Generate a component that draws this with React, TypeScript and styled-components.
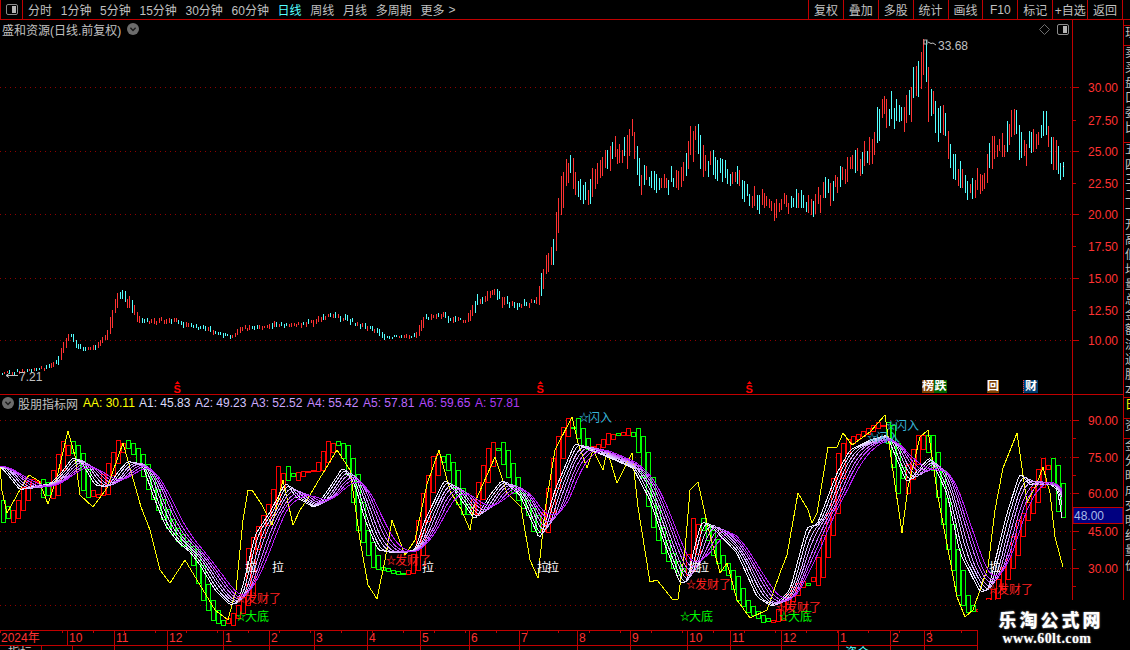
import React from "react";
import styled, { createGlobalStyle } from "styled-components";

type Pt = [number, number];

const RED_LINE = "#c00000";
const RED_TEXT = "#ff3232";
const GRAY_TEXT = "#c0c0c0";

const GlobalStyle = createGlobalStyle`
  html, body {
    margin: 0;
    background: #000;
    overflow: hidden;
  }
  body {
    font-family: "Liberation Sans", "Noto Sans CJK SC", sans-serif;
    font-size: 12px;
  }
`;

const Screen = styled.div`
  position: relative;
  width: 1130px;
  height: 650px;
  background: #000;
  display: flex;
  flex-direction: column;
  overflow: hidden;
  color: ${GRAY_TEXT};
`;

/* top toolbar */
const Toolbar = styled.div`
  height: 19px;
  flex: none;
  display: flex;
  align-items: center;
  justify-content: space-between;
  border-bottom: 1px solid ${RED_LINE};
  padding-right: 7px;
`;

const Nav = styled.div`
  height: 100%;
  display: flex;
  align-items: center;
  gap: 8.7px;
`;

const NavIconCell = styled.div`
  width: 23px;
  height: 100%;
  box-sizing: border-box;
  border-left: 1px solid ${RED_LINE};
  border-right: 1px solid ${RED_LINE};
  display: flex;
  align-items: center;
  justify-content: center;
  margin-right: -3.700px;
`;

const NavItem = styled.span<{ $active?: boolean }>`
  color: ${(p) => (p.$active ? "#54ffff" : GRAY_TEXT)};
  white-space: nowrap;
`;

const NavMore = styled.span`
  margin-left: -4.700px;
  color: ${GRAY_TEXT};
`;

const ToolGroup = styled.div`
  height: 100%;
  display: flex;
  border-right: 1px solid ${RED_LINE};
`;

const ToolButton = styled.div`
  width: 34.9px;
  box-sizing: border-box;
  border-left: 1px solid ${RED_LINE};
  display: flex;
  align-items: center;
  justify-content: center;
  white-space: nowrap;
`;

/* main layout */
const Body = styled.div`
  flex: 1;
  display: flex;
  min-height: 0;
`;

const MainColumn = styled.div`
  width: 1123px;
  flex: none;
  display: flex;
  flex-direction: column;
`;

const ChartRow = styled.div<{ $height: number; $line?: boolean }>`
  height: ${(p) => p.$height}px;
  flex: none;
  box-sizing: border-box;
  display: flex;
  border-bottom: ${(p) => (p.$line ? `1px solid ${RED_LINE}` : "none")};
`;

const ChartPane = styled.div`
  position: relative;
  width: 1072px;
  flex: none;
  display: flex;
  flex-direction: column;
`;

const PaneHead = styled.div<{ $height: number }>`
  height: ${(p) => p.$height}px;
  flex: none;
  display: flex;
  align-items: center;
  padding: 0 3px 0 2px;
`;

const PaneTitle = styled.span<{ $indented?: boolean }>`
  margin: ${(p) => (p.$indented ? "0 5px 0 4px" : "0 6px 0 0")};
  white-space: nowrap;
`;

const HeadIcons = styled.div`
  margin-left: auto;
  display: flex;
  align-items: center;
  gap: 7px;
`;

const Legend = styled.div`
  display: flex;
`;

const LegendItem = styled.span<{ $color: string }>`
  width: 56px;
  color: ${(p) => p.$color};
  white-space: nowrap;
`;

const Plot = styled.svg`
  display: block;
  flex: none;
`;

const AxisColumn = styled.div`
  width: 51px;
  flex: none;
  box-sizing: border-box;
  border-left: 1px solid ${RED_LINE};
`;

const AxisText = styled.text<{ $color?: string }>`
  font: 12px "Liberation Sans", sans-serif;
  fill: ${(p) => p.$color ?? RED_TEXT};
`;

const SignalS = styled.text`
  font: 700 11px "Liberation Sans", sans-serif;
  fill: #ff0000;
`;

const MarkText = styled.text<{ $color: string; $small?: boolean }>`
  font: ${(p) => (p.$small ? "700 10px" : "12px")} "Noto Sans CJK SC", sans-serif;
  fill: ${(p) => p.$color};
`;

const PriceNote = styled.text`
  font: 12px "Liberation Sans", sans-serif;
  fill: ${GRAY_TEXT};
`;

const Badge = styled.span<{ $left: number; $width: number; $bg: string; $edge?: boolean }>`
  position: absolute;
  left: ${(p) => p.$left}px;
  top: 360px;
  width: ${(p) => p.$width}px;
  height: 13px;
  box-sizing: border-box;
  line-height: 13px;
  text-align: center;
  background: ${(p) => p.$bg};
  border-left: ${(p) => (p.$edge ? "1px dotted #ff3232" : "none")};
  color: #fff;
  font-size: 12px;
  font-weight: 700;
  overflow: hidden;
`;

/* month axis */
const TimeAxis = styled.div`
  height: 16px;
  flex: none;
  box-sizing: border-box;
  display: flex;
  border-top: 1px solid ${RED_LINE};
  border-bottom: 1px solid ${RED_LINE};
  background: repeating-linear-gradient(90deg, ${RED_LINE} 0 1px, transparent 1px 31px) 0 0 / 100% 2px no-repeat;
`;

const TimeCell = styled.div<{ $width: number }>`
  width: ${(p) => p.$width}px;
  flex: none;
  box-sizing: border-box;
  padding-left: 1px;
  border-right: 1px solid ${RED_LINE};
  color: ${RED_TEXT};
  line-height: 14px;
  white-space: nowrap;
`;

const BottomRow = styled.div`
  height: 4px;
  flex: none;
  display: flex;
  overflow: hidden;
  line-height: 14px;
`;

const BottomCell = styled.div<{ $width: number; $pad?: number; $color?: string }>`
  width: ${(p) => p.$width}px;
  flex: none;
  box-sizing: border-box;
  padding-left: ${(p) => p.$pad ?? 0}px;
  border-right: 1px solid ${RED_LINE};
  color: ${(p) => p.$color ?? GRAY_TEXT};
  white-space: nowrap;
  overflow: hidden;
`;

/* clipped side panel on the far right */
const SideStrip = styled.div`
  width: 7px;
  flex: none;
  box-sizing: border-box;
  border-left: 1px solid ${RED_LINE};
  display: flex;
  flex-direction: column;
  overflow: hidden;
`;

const StripCell = styled.div<{ $height: number; $color?: string }>`
  height: ${(p) => p.$height}px;
  flex: none;
  box-sizing: border-box;
  border-bottom: 1px solid ${RED_LINE};
  padding-left: 1px;
  width: 40px;
  color: ${(p) => p.$color ?? GRAY_TEXT};
  line-height: 15px;
  overflow: hidden;
`;

/* watermark in the corner */
const Watermark = styled.div`
  position: absolute;
  right: 0;
  bottom: 0;
  width: 152px;
  height: 50px;
  background: #000;
  display: flex;
  flex-direction: column;
  align-items: center;
  padding: 9px 6px 0 0;
  box-sizing: border-box;
`;

const WatermarkTitle = styled.div`
  font: 900 18px/20px "Noto Sans CJK SC", sans-serif;
  letter-spacing: 3px;
  color: #fff;
  text-shadow: 0 0 2px #9a9a9a;
  white-space: nowrap;
`;

const WatermarkUrl = styled.div`
  font: 700 14px/14px "Liberation Serif", serif;
  letter-spacing: 0.4px;
  color: #fff;
  text-shadow: 0 0 2px #8a8a8a;
  margin: 3px 8px 0 0;
  white-space: nowrap;
`;

/* ---- data traced from the chart ---- */

const PRICE: Pt[] = [
  [0, 373], [20, 372], [45, 368], [58, 362], [65, 345], [70, 334], [78, 346], [90, 350], [100, 343], [108, 335],
  [113, 315], [120, 295], [125, 298], [133, 308], [140, 320], [150, 322], [170, 320], [190, 325], [210, 330],
  [230, 337], [245, 328], [260, 327], [275, 325], [290, 326], [310, 323], [330, 316], [345, 318], [360, 325],
  [378, 331], [385, 337], [400, 337], [418, 335], [425, 318], [440, 315], [455, 320], [468, 320], [478, 300],
  [495, 293], [505, 302], [520, 305], [538, 302], [545, 270], [555, 245], [562, 190], [570, 162], [578, 190],
  [590, 195], [600, 165], [612, 150], [622, 160], [632, 132], [640, 178], [660, 184], [680, 178], [690, 145],
  [697, 132], [705, 160], [720, 172], [740, 182], [750, 195], [770, 208], [790, 202], [810, 207], [830, 190],
  [850, 165], [870, 155], [885, 108], [895, 112], [905, 120], [915, 85], [925, 58], [930, 100], [945, 130],
  [955, 165], [968, 195], [985, 178], [995, 145], [1005, 150], [1015, 122], [1025, 150], [1035, 135], [1045, 125],
  [1055, 155], [1062, 172],
];

const YELLOW: Pt[] = [
  [0, 466], [2, 491], [7, 513], [21, 488], [29, 475], [39, 481], [48, 504], [57, 477], [68, 431], [75, 456], [80, 495],
  [93, 507], [107, 488], [123, 443], [141, 507], [150, 530], [160, 570], [170, 583], [185, 560], [200, 585], [215, 610],
  [228, 620], [236, 590], [243, 520], [248, 490], [252, 490], [262, 505], [272, 525], [283, 480], [293, 525], [300, 510],
  [307, 500], [320, 478], [337, 450], [350, 470], [360, 540], [368, 585], [377, 599], [385, 560], [392, 520], [405, 555],
  [415, 540], [427, 484], [439, 450], [450, 491], [461, 509], [470, 530], [475, 502], [495, 457], [507, 493], [521, 507],
  [530, 560], [538, 578], [545, 510], [555, 450], [572, 417], [578, 443], [587, 468], [593, 450], [603, 470], [607, 450],
  [617, 483], [632, 453], [638, 507], [650, 582], [657, 580], [673, 600], [678, 599], [685, 550], [690, 490], [698, 482],
  [707, 523], [720, 573], [727, 563], [737, 600], [750, 618], [767, 610], [780, 573], [787, 555], [798, 493], [808, 510],
  [812, 523], [817, 513], [828, 447], [837, 447], [843, 433], [852, 445], [870, 432], [885, 415], [890, 450], [902, 533],
  [908, 487], [920, 437], [928, 430], [938, 497], [957, 597], [965, 617], [973, 610], [988, 567], [995, 510], [1003, 468],
  [1017, 433], [1027, 503], [1037, 483], [1043, 467], [1050, 493], [1055, 537], [1063, 567],
];

const BAND: Pt[] = [
  [0, 466], [8, 475], [20, 490], [35, 486], [50, 484], [62, 472], [73, 457], [82, 463], [95, 485], [108, 487], [118, 472],
  [128, 461], [143, 466], [153, 495], [165, 525], [178, 542], [190, 552], [200, 565], [215, 590], [230, 605], [238, 602],
  [245, 578], [255, 535], [270, 512], [286, 482], [296, 497], [315, 508], [328, 490], [343, 467], [355, 485], [365, 520],
  [378, 550], [395, 553], [415, 550], [425, 520], [445, 479], [458, 495], [475, 520], [490, 495], [502, 480], [520, 495],
  [540, 540], [555, 490], [575, 443], [583, 447], [610, 458], [633, 468], [650, 500], [665, 545], [680, 583], [687, 582],
  [695, 545], [702, 521], [713, 528], [737, 553], [757, 597], [773, 607], [790, 590], [807, 527], [817, 525], [837, 473],
  [850, 450], [870, 440], [887, 435], [895, 455], [907, 483], [918, 470], [930, 457], [947, 493], [960, 553], [980, 592],
  [988, 590], [1007, 513], [1020, 473], [1030, 485], [1050, 484], [1058, 490], [1063, 527],
];

const STICK: Pt[] = [
  [0, 500], [8, 525], [14, 515], [20, 505], [29, 482], [41, 478], [46, 498], [52, 495], [58, 465], [68, 438], [79, 456],
  [89, 498], [104, 493], [107, 474], [123, 438], [139, 456], [153, 491], [170, 525], [185, 545], [193, 550], [200, 577],
  [207, 600], [217, 620], [227, 625], [230, 620], [237, 613], [247, 597], [250, 553], [260, 530], [275, 498], [282, 466],
  [293, 481], [300, 472], [318, 470], [332, 441], [343, 445], [352, 474], [362, 530], [377, 567], [405, 575], [415, 568],
  [425, 500], [439, 449], [452, 470], [461, 502], [470, 520], [475, 506], [495, 438], [503, 452], [511, 474], [516, 491],
  [523, 502], [532, 515], [540, 540], [550, 500], [560, 440], [572, 418], [577, 428], [583, 440], [590, 450], [603, 443],
  [612, 433], [622, 435], [632, 428], [638, 437], [645, 463], [650, 497], [657, 527], [667, 553], [678, 570], [685, 578],
  [693, 550], [698, 510], [703, 527], [710, 533], [717, 555], [723, 565], [733, 577], [740, 597], [750, 610], [767, 622],
  [777, 620], [783, 607], [797, 587], [805, 580], [812, 585], [817, 577], [823, 553], [832, 513], [840, 457], [847, 443],
  [853, 438], [865, 432], [885, 420], [890, 433], [895, 457], [902, 493], [910, 470], [920, 440], [925, 428], [930, 445],
  [937, 470], [943, 503], [950, 540], [957, 570], [963, 600], [973, 613], [985, 608], [993, 597], [1003, 577], [1013, 553],
  [1020, 523], [1027, 513], [1033, 500], [1040, 477], [1045, 457], [1050, 460], [1053, 467], [1058, 487], [1063, 517],
];

const interp = (pts: Pt[], x: number) => {
  if (x <= pts[0][0]) return pts[0][1];
  for (let i = 1; i < pts.length; i++) {
    if (x <= pts[i][0]) {
      const [x0, y0] = pts[i - 1];
      const [x1, y1] = pts[i];
      return y0 + ((y1 - y0) * (x - x0)) / (x1 - x0);
    }
  }
  return pts[pts.length - 1][1];
};

let seed = 41;
const rnd = () => {
  seed = (seed * 1664525 + 1013904223) % 4294967296;
  return seed / 4294967296;
};

const buildCandles = () => {
  let up = "";
  let down = "";
  for (let i = 0; i * 2.45 + 2 < 1063; i++) {
    const x = Math.round(i * 2.45 + 2) + 0.5;
    const y = interp(PRICE, x);
    const slope = interp(PRICE, x + 3) - interp(PRICE, x - 3);
    const vol = Math.max(3, 3 + (340 - y) * 0.09);
    const h = vol * (0.4 + 0.8 * rnd()) + Math.abs(slope) * 0.6;
    const mid = y + (rnd() - 0.5) * vol * 0.8;
    const isUp = rnd() < (slope < 0 ? 0.78 : 0.3);
    const seg = `M${x} ${Math.round(mid - h / 2)}V${Math.round(mid + h / 2)}`;
    if (isUp) up += seg;
    else down += seg;
  }
  return { up, down };
};

const buildBoxes = () => {
  const boxes: { x: number; y: number; h: number; up: boolean }[] = [];
  for (let x = 1; x < 1063; x += 5) {
    const a = interp(STICK, x - 4);
    const b = interp(STICK, x + 6);
    boxes.push({
      x,
      y: Math.round(Math.min(a, b)),
      h: Math.round(Math.abs(a - b)),
      up: interp(STICK, x + 4) < interp(STICK, x - 2),
    });
  }
  return boxes;
};

const smoothBand = () => {
  const raw: number[] = [];
  for (let x = -60; x <= 1075; x++) raw.push(interp(BAND, x));
  return (x: number, back: number) => {
    const end = Math.round(x) + 60;
    const start = Math.max(0, Math.round(end - back));
    let sum = 0;
    for (let i = start; i <= end; i++) sum += raw[i];
    return sum / (end - start + 1);
  };
};

const BAND_COLORS = ["#f0ecff", "#e0d4ff", "#d8b8ff", "#d094ff", "#ca6cff", "#c244ff", "#b81cf8"];

const buildBandLines = () => {
  const avg = smoothBand();
  return BAND_COLORS.map((_, n) => {
    const parts: string[] = [];
    for (let x = 0; x <= 1063; x += 2) {
      parts.push(`${x},${avg(x + 2, 4 + n * 5.5).toFixed(1)}`);
    }
    return parts.join(" ");
  });
};

const candles = buildCandles();
const boxes = buildBoxes();
const bandLines = buildBandLines();
const yellowPoints = YELLOW.map((p) => p.join(",")).join(" ");

const PRICE_LABELS: [string, number, boolean][] = [
  ["30.00", 87, true], ["27.50", 120, false], ["25.00", 151, true], ["22.50", 183, false], ["20.00", 214, true],
  ["17.50", 246, false], ["15.00", 278, true], ["12.50", 310, false], ["10.00", 340, true],
];
const IND_LABELS: [string, number][] = [["90.00", 420], ["75.00", 457], ["60.00", 493], ["45.00", 531], ["30.00", 568]];
const IND_GRID = [420, 457, 493, 531, 568, 605];
const S_MARKS = [177, 540, 749];

const LEGEND: [string, string][] = [
  ["AA: 30.11", "#ffff00"], ["A1: 45.83", "#dcdcfc"], ["A2: 49.23", "#d4c4fc"], ["A3: 52.52", "#cca8fc"],
  ["A4: 55.42", "#c488fc"], ["A5: 57.81", "#bc68fc"], ["A6: 59.65", "#b448fc"], ["A: 57.81", "#ac38f0"],
];

const NAV_ITEMS = ["分时", "1分钟", "5分钟", "15分钟", "30分钟", "60分钟", "日线", "周线", "月线", "多周期", "更多"];
const TOOLS = ["复权", "叠加", "多股", "统计", "画线", "F10", "标记", "+自选", "返回"];
const MONTHS: [string, number][] = [
  ["2024年", 68], ["10", 47], ["11", 53], ["12", 56], ["1", 46], ["2", 45], ["3", 53], ["4", 53], ["5", 49], ["6", 50],
  ["7", 58], ["8", 53], ["9", 57], ["10", 43], ["11", 51], ["12", 57], ["1", 52], ["2", 34], ["3", 53],
];
const BOTTOM_CELLS: [number, string, number, string?][] = [
  [42, "指标", 8], [31, "", 0], [42, "", 0], [53, "", 0], [56, "", 0], [46, "", 0], [45, "", 0], [53, "", 0], [53, "", 0],
  [49, "", 0], [50, "", 0], [58, "", 0], [53, "", 0], [57, "", 0], [43, "", 0], [51, "", 0], [57, "", 0],
  [52, "资金", 6, "#54ffff"], [34, "", 0], [53, "", 0],
];
const STRIP: [number, string | undefined, string][] = [
  [6, undefined, ""],
  [20, undefined, "现"],
  [97, undefined, "卖买盘口委比"],
  [255, undefined, "五四三二一开高低均量总金额流通股本市"],
  [21, "#ffff00", "日"],
  [20, undefined, "资"],
  [211, undefined, "金分时成交明细量价"],
];

const PanelIcon = () => (
  <svg width="12" height="11" viewBox="0 0 12 11">
    <rect x="0.5" y="0.5" width="11" height="10" rx="1.5" fill="none" stroke="#8c8c8c" />
    <rect x="6" y="2" width="4" height="7" fill="#b4b4b4" />
  </svg>
);

const DropIcon = () => (
  <svg width="12" height="12" viewBox="0 0 12 12" style={{ flex: "none" }}>
    <circle cx="6" cy="6" r="6" fill="#6c6c6c" />
    <path d="M3.4 4.8 6 7.4l2.6-2.6" fill="none" stroke="#1a1a1a" strokeWidth="1.4" />
  </svg>
);

const DiamondIcon = () => (
  <svg width="11" height="11" viewBox="0 0 11 11">
    <path d="M5.5.5 10.5 5.5 5.5 10.5.5 5.5Z" fill="none" stroke="#6e6e6e" />
  </svg>
);

const GridLines = ({ ys }: { ys: number[] }) => (
  <>
    {ys.map((y) => (
      <line
        key={y}
        x1="0"
        x2="1072"
        y1={y + 0.5}
        y2={y + 0.5}
        stroke="#900000"
        strokeDasharray="1 4"
        shapeRendering="crispEdges"
      />
    ))}
  </>
);

const StarLabel = ({ x, y, color, text }: { x: number; y: number; color: string; text: string }) => (
  <>
    <MarkText x={x - 1} y={y + 3} $color={color} $small>☆</MarkText>
    <MarkText x={x + 8} y={y + 4} $color={color}>{text}</MarkText>
  </>
);

const PricePlot = () => (
  <Plot width="1072" height="356" viewBox="0 38 1072 356">
    <GridLines ys={[87, 151, 214, 278, 340]} />
    <path d={candles.up} stroke="#ff3232" fill="none" shapeRendering="crispEdges" />
    <path d={candles.down} stroke="#54ffff" fill="none" shapeRendering="crispEdges" />
    <path d="M923.5 43V75" stroke="#ff3232" shapeRendering="crispEdges" />
    <path d="M926.5 40V73" stroke="#54ffff" shapeRendering="crispEdges" />
    <rect x="1063" y="166" width="1" height="1" fill="#fff" />
    <rect x="924" y="40" width="3" height="4" fill="none" stroke="#b0b0b0" />
    <path d="M928 42l3 1.500 2-.5 3 2" stroke={GRAY_TEXT} fill="none" />
    <PriceNote x="938" y="50">33.68</PriceNote>
    <path d="M6 375.500H18M6 375.500l3-2M6 375.500l3 2" stroke={GRAY_TEXT} fill="none" />
    <PriceNote x="19" y="381">7.21</PriceNote>
    {S_MARKS.map((x) => (
      <g key={x}>
        <path d={`M${x - 2} 384h5l-2.500-3z`} fill="#ff0000" />
        <SignalS x={x - 3.5} y="393">S</SignalS>
      </g>
    ))}
  </Plot>
);

const IndicatorPlot = () => (
  <Plot width="1072" height="219" viewBox="0 411 1072 219">
    <GridLines ys={IND_GRID} />
    {boxes.map((b) =>
      b.h < 2 ? (
        <rect key={b.x} x={b.x} y={b.y} width="5" height="2" fill={b.up ? "#ff0000" : "#00ff00"} />
      ) : (
        <rect
          key={b.x}
          x={b.x + 0.5}
          y={b.y + 0.5}
          width="4"
          height={b.h}
          fill="none"
          stroke={b.up ? "#ff0000" : "#00ff00"}
          shapeRendering="crispEdges"
        />
      )
    )}
    <polyline points={yellowPoints} fill="none" stroke="#ffff00" shapeRendering="crispEdges" />
    {bandLines.map((pts, n) => (
      <polyline key={n} points={pts} fill="none" stroke={BAND_COLORS[n]} shapeRendering="crispEdges" />
    ))}
    {[245, 272, 422, 537, 547, 688, 697, 989].map((x) => (
      <MarkText key={x} x={x} y="572" $color="#ffffff">拉</MarkText>
    ))}
    <StarLabel x={237} y={599} color="#ff2020" text="发财了" />
    <StarLabel x={387} y={561} color="#ff2020" text="发财了" />
    <StarLabel x={687} y={585} color="#ff2020" text="发财了" />
    <StarLabel x={777} y={608} color="#ff2020" text="发财了" />
    <StarLabel x={989} y={590} color="#ff2020" text="发财了" />
    <StarLabel x={237} y={617} color="#00ff00" text="大底" />
    <StarLabel x={681} y={617} color="#00ff00" text="大底" />
    <StarLabel x={780} y={617} color="#00ff00" text="大底" />
    <StarLabel x={580} y={418} color="#38b4d8" text="闪入" />
    <StarLabel x={887} y={426} color="#38b4d8" text="闪入" />
    <StarLabel x={868} y={438} color="#38b4d8" text="闪入" />
  </Plot>
);

const PriceAxis = () => (
  <Plot width="50" height="374" viewBox="1073 20 50 374">
    {PRICE_LABELS.map(([label, y, major]) => (
      <g key={label}>
        <rect x="1073" y={y} width={major ? 6 : 3} height="1" fill={RED_LINE} />
        <AxisText x="1088" y={y + 5}>{label}</AxisText>
      </g>
    ))}
  </Plot>
);

const IndicatorAxis = () => (
  <Plot width="50" height="235" viewBox="1073 395 50 235">
    {IND_LABELS.map(([label, y]) => (
      <g key={label}>
        <rect x="1073" y={y} width="6" height="1" fill={RED_LINE} />
        <rect x="1073" y={y + 18} width="3" height="1" fill={RED_LINE} />
        <AxisText x="1088" y={y + 5}>{label}</AxisText>
      </g>
    ))}
    <rect x="1073" y="507.500" width="50" height="16" fill="#000080" stroke={RED_LINE} />
    <AxisText x="1074" y="520" $color="#a8bce8">48.00</AxisText>
  </Plot>
);

export default function App() {
  return (
    <Screen>
      <GlobalStyle />
      <Toolbar>
        <Nav>
          <NavIconCell>
            <PanelIcon />
          </NavIconCell>
          {NAV_ITEMS.map((item) => (
            <NavItem key={item} $active={item === "日线"}>
              {item}
            </NavItem>
          ))}
          <NavMore>&gt;</NavMore>
        </Nav>
        <ToolGroup>
          {TOOLS.map((tool) => (
            <ToolButton key={tool}>{tool}</ToolButton>
          ))}
        </ToolGroup>
      </Toolbar>

      <Body>
        <MainColumn>
          <ChartRow $height={375} $line>
            <ChartPane>
              <PaneHead $height={18}>
                <PaneTitle>盛和资源(日线.前复权)</PaneTitle>
                <DropIcon />
                <HeadIcons>
                  <DiamondIcon />
                  <PanelIcon />
                </HeadIcons>
              </PaneHead>
              <PricePlot />
              <Badge $left={922} $width={12} $bg="#804000">榜</Badge>
              <Badge $left={934} $width={13} $bg="#006400">跌</Badge>
              <Badge $left={987} $width={12} $bg="#804000">回</Badge>
              <Badge $left={1023} $width={15} $bg="#003c70" $edge>财</Badge>
            </ChartPane>
            <AxisColumn>
              <PriceAxis />
            </AxisColumn>
          </ChartRow>

          <ChartRow $height={235}>
            <ChartPane>
              <PaneHead $height={16}>
                <DropIcon />
                <PaneTitle $indented>股朋指标网</PaneTitle>
                <Legend>
                  {LEGEND.map(([text, color]) => (
                    <LegendItem key={text} $color={color}>
                      {text}
                    </LegendItem>
                  ))}
                </Legend>
              </PaneHead>
              <IndicatorPlot />
            </ChartPane>
            <AxisColumn>
              <IndicatorAxis />
            </AxisColumn>
          </ChartRow>

          <TimeAxis>
            {MONTHS.map(([label, width], i) => (
              <TimeCell key={i} $width={width}>
                {label}
              </TimeCell>
            ))}
          </TimeAxis>
          <BottomRow>
            {BOTTOM_CELLS.map(([width, text, pad, color], i) => (
              <BottomCell key={i} $width={width} $pad={pad} $color={color}>
                {text}
              </BottomCell>
            ))}
          </BottomRow>
        </MainColumn>

        <SideStrip>
          {STRIP.map(([height, color, text], i) => (
            <StripCell key={i} $height={height} $color={color}>
              {text.split("").map((c, j) => (
                <div key={j}>{c}</div>
              ))}
            </StripCell>
          ))}
        </SideStrip>
      </Body>

      <Watermark>
        <WatermarkTitle>乐淘公式网</WatermarkTitle>
        <WatermarkUrl>www.60lt.com</WatermarkUrl>
      </Watermark>
    </Screen>
  );
}
